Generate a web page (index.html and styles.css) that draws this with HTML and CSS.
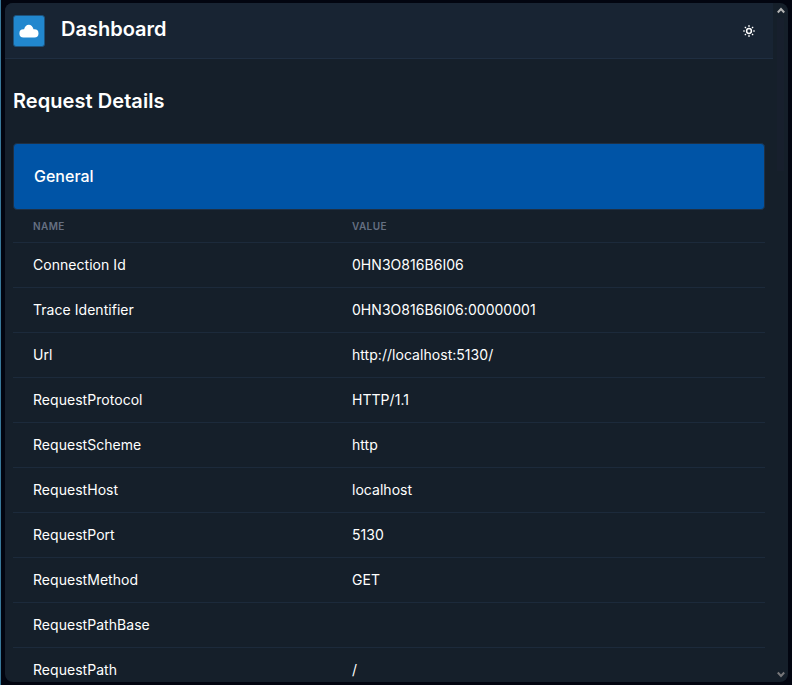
FILE: index.html
```html
<!DOCTYPE html>
<html lang="en">
<head>
<meta charset="utf-8">
<title>Dashboard</title>
<link rel="stylesheet" href="styles.css">
</head>
<body>
<div class="window">
  <div class="page">
    <header class="topbar">
      <div class="logo">
        <svg width="20" height="14" viewBox="0 0 20 14" fill="#fff"><path d="M4.500 13.500a4.100 4.100 0 0 1 0-8.200h.6C5.700 2.600 7.500 .8 9.800 .8s4.100 1.800 4.700 4.500h.9a4.100 4.100 0 0 1 0 8.200z"/></svg>
      </div>
      <h1 class="brand">Dashboard</h1>
      <svg class="sun" width="14" height="14" viewBox="0 0 14 14" fill="none" stroke="#fff" stroke-width="1.500"><circle cx="7" cy="7" r="2.400"/><path d="M7 1v2M7 11v2M1 7h2M11 7h2M2.800 2.800l1.200 1.200M10 10l1.200 1.200M2.800 11.200l1.200-1.200M10 4l1.200-1.200" stroke-width="1.200"/></svg>
    </header>
    <main class="content">
      <h2 class="title">Request Details</h2>
      <div class="card">General</div>
      <div class="table">
        <div class="row head"><span>NAME</span><span>VALUE</span></div>
        <div class="row"><span>Connection Id</span><span>0HN3O816B6I06</span></div>
        <div class="row"><span>Trace Identifier</span><span>0HN3O816B6I06:00000001</span></div>
        <div class="row"><span>Url</span><span>http://localhost:5130/</span></div>
        <div class="row"><span>RequestProtocol</span><span>HTTP/1.1</span></div>
        <div class="row"><span>RequestScheme</span><span>http</span></div>
        <div class="row"><span>RequestHost</span><span>localhost</span></div>
        <div class="row"><span>RequestPort</span><span>5130</span></div>
        <div class="row"><span>RequestMethod</span><span>GET</span></div>
        <div class="row"><span>RequestPathBase</span><span></span></div>
        <div class="row"><span>RequestPath</span><span>/</span></div>
      </div>
    </main>
  </div>
  <div class="scrollbar">
    <svg width="8" height="7" viewBox="0 0 8 7" fill="none" stroke="#b4b4b4" stroke-width="2"><path d="M.8 5.500L4 2l3.200 3.500"/></svg>
    <div class="thumb"></div>
    <svg class="down" width="8" height="7" viewBox="0 0 8 7" fill="none" stroke="#77777a" stroke-width="2"><path d="M.8 1.500L4 5l3.200-3.500"/></svg>
  </div>
</div>
</body>
</html>
```
FILE: styles.css
```css
* { box-sizing: border-box; }
body {
  margin: 0;
  height: 685px;
  padding: 3px 4px 3px 4px;
  overflow: hidden;
  background: #020510;
  border-left: 1px solid #39799b;
  color: #fff;
  font: 14px/20px Inter, "Liberation Sans", sans-serif;
}
.window {
  display: flex;
  height: 679px;
  border-radius: 8px;
  overflow: hidden;
  background: #151f2a;
}
.page { flex: 1; overflow: hidden; }
.topbar {
  display: flex;
  align-items: center;
  height: 56px;
  padding: 0 17px 0 8px;
  background: #182433;
  border-bottom: 1px solid #1f2e41;
}
.logo {
  display: flex;
  align-items: center;
  justify-content: center;
  width: 32px;
  height: 32px;
  border: 1px solid #1d527c;
  border-radius: 3px;
  background: #2187ce;
}
.brand {
  margin: 0 auto 4px 16px;
  font-size: 20px;
  line-height: 28px;
  font-weight: 600;
}
.content { padding: 28px 8px 0; }
.title {
  margin: 0 0 28px;
  font-size: 20px;
  line-height: 28px;
  font-weight: 600;
  letter-spacing: .06px;
}
.card {
  height: 67px;
  padding: 0 20px;
  border: 1px solid #1f3044;
  border-radius: 4px;
  background: #0054a6;
  font-size: 16px;
  line-height: 65px;
  font-weight: 500;
}
.row {
  display: grid;
  grid-template-columns: 319px 1fr;
  align-items: center;
  height: 45px;
  padding-left: 20px;
  border-bottom: 1px solid #1c2a3b;
  letter-spacing: .04px;
}
.head {
  height: 33px;
  color: #667082;
  font-size: 10px;
  font-weight: 600;
  letter-spacing: .4px;
}
.scrollbar {
  display: flex;
  flex-direction: column;
  align-items: center;
  width: 15px;
  padding: 4px 0;
}
.thumb {
  width: 7px;
  height: 153px;
  margin-top: 4px;
  background: #171f2d;
}
.down { margin-top: auto; }
```
